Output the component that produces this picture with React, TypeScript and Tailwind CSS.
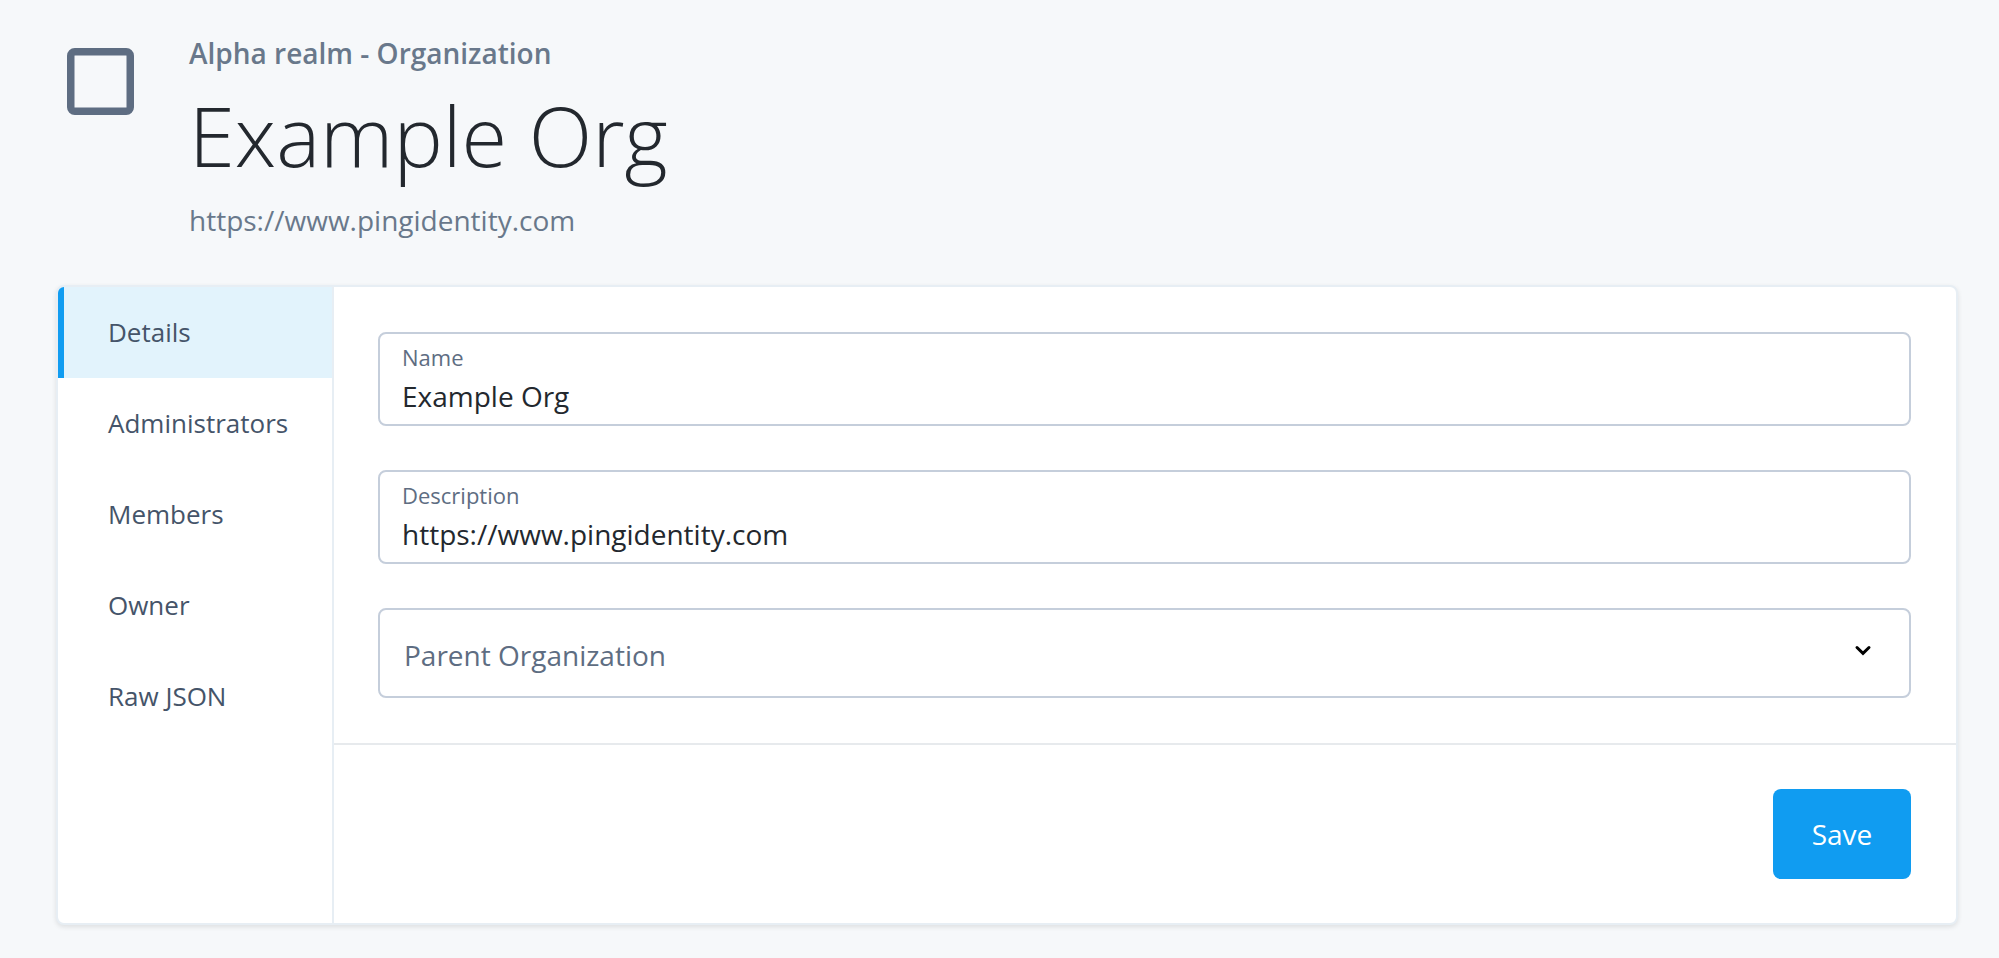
import { useState } from "react";

const tabs = ["Details", "Administrators", "Members", "Owner", "Raw JSON"];

function TextField({ id, label, initial }: { id: string; label: string; initial: string }) {
  const [value, setValue] = useState(initial);
  return (
    <div className="flex flex-col gap-1 rounded-[8px] border-2 border-[#c5cedb] bg-white px-[22px] py-2">
      <label htmlFor={id} className="text-[22px] leading-[30px] text-[#5e6d82]">
        {label}
      </label>
      <input
        id={id}
        type="text"
        value={value}
        onChange={(e) => setValue(e.target.value)}
        className="h-10 w-full bg-transparent text-[28px] leading-[40px] text-[#23282e] outline-none"
      />
    </div>
  );
}

export default function App() {
  const [active, setActive] = useState("Details");
  return (
    <div className="min-h-screen bg-[#f6f8fa] pt-[33px] pr-[41px] pb-8 pl-14 font-['Open_Sans',sans-serif]">
      <header className="flex items-start pl-[11px]">
        <svg className="mt-[15px] mr-[55px] size-[67px] shrink-0" viewBox="0 0 67 67" fill="none" aria-hidden="true">
          <rect x="3.75" y="3.75" width="59.5" height="59.5" rx="4" stroke="#5e6d82" strokeWidth="7.5" />
        </svg>
        <div>
          <p className="text-[28px] leading-[40px] font-semibold text-[#69788b]">Alpha realm - Organization</p>
          <h1 className="mt-3 text-[83px] leading-[100px] font-light text-[#23282e]">Example Org</h1>
          <p className="mt-[15px] text-[28px] leading-[40px] text-[#69788b]">https://www.pingidentity.com</p>
        </div>
      </header>

      <div className="mt-[45px] flex overflow-hidden rounded-[8px] border-2 border-[#e7eef4] bg-white shadow-[0_2px_5px_rgba(0,0,0,0.1)]">
        <nav className="w-[276px] shrink-0 border-r-2 border-[#e7eef4]" aria-label="Organization sections">
          {tabs.map((tab) => (
            <button
              key={tab}
              type="button"
              onClick={() => setActive(tab)}
              className={
                tab === active
                  ? "block h-[91px] w-full border-l-6 border-[#109cf1] bg-[#e2f3fc] pl-[44px] text-left text-[26px] text-[#455469]"
                  : "block h-[91px] w-full border-l-6 border-transparent pl-[44px] text-left text-[26px] text-[#455469]"
              }
            >
              {tab}
            </button>
          ))}
        </nav>

        <form className="min-w-0 flex-1" onSubmit={(e) => e.preventDefault()}>
          <div className="flex flex-col gap-11 py-[45px] pr-[45px] pl-11">
            <TextField id="name" label="Name" initial="Example Org" />
            <TextField id="description" label="Description" initial="https://www.pingidentity.com" />
            <div className="relative">
              <select
                aria-label="Parent Organization"
                className="block h-[90px] w-full appearance-none rounded-[8px] border-2 border-[#c5cedb] bg-white px-6 pt-1 text-[28px] text-[#5e6d82] outline-none"
              >
                <option>Parent Organization</option>
              </select>
              <svg
                className="pointer-events-none absolute top-[37px] right-[39px] h-[12px] w-[18px]"
                viewBox="0 0 18 12"
                fill="none"
                aria-hidden="true"
              >
                <path d="M3 2.5 L9 8.4 L15 2.5" stroke="#000" strokeWidth="3" strokeLinecap="round" />
              </svg>
            </div>
          </div>
          <div className="flex justify-end border-t-2 border-[#e7eaed] py-11 pr-[45px]">
            <button type="submit" className="h-[90px] w-[138px] rounded-[8px] bg-[#109cf1] text-[28px] text-white">
              Save
            </button>
          </div>
        </form>
      </div>
    </div>
  );
}
